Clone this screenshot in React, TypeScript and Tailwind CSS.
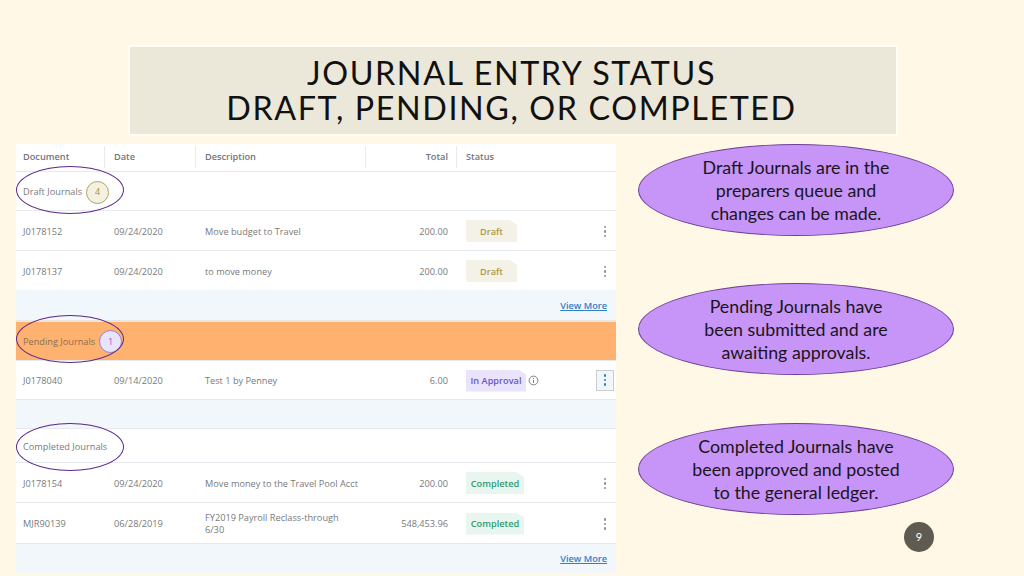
import React from "react";

const rowGrid = "grid grid-cols-[91px_91px_160px_83px_1fr] items-center pl-[7px] pr-[8px] pt-[2px]";

function Kebab({ active }: { active?: boolean }) {
  const c = active ? "bg-[#1f7fd0]" : "bg-[#8d8f92]";
  return (
    <div className={"flex flex-col items-center justify-center gap-[2px] " + (active ? "w-[18px] h-[21px] mr-[-6px] mt-[-2px] border border-[#c9ced2] bg-[#f2f6f9]" : "w-[6px]")}>
      <span className={"w-[2.5px] h-[2.5px] rounded-full " + c} />
      <span className={"w-[2.5px] h-[2.5px] rounded-full " + c} />
      <span className={"w-[2.5px] h-[2.5px] rounded-full " + c} />
    </div>
  );
}

const tone = {
  Draft: "w-[51px] bg-[#f4f1e7] text-[#b09a3c] justify-center",
  "In Approval": "w-[60px] bg-[#e9e3fc] text-[#6a55c4] justify-center",
  Completed: "w-[58px] bg-[#e9f6f0] text-[#2f9a70] justify-center",
} as const;

function Row({ doc, date, desc, total, status, info, active, h, border = true }: {
  doc: string; date: string; desc: React.ReactNode; total: string; status: keyof typeof tone; info?: boolean; active?: boolean; h: string; border?: boolean;
}) {
  return (
    <div className={rowGrid + " text-[9.2px] text-[#777a7d] bg-white " + h + (border ? " border-b border-[#e6eaee]" : "")}>
      <div>{doc}</div>
      <div>{date}</div>
      <div className="leading-[12px] whitespace-nowrap">{desc}</div>
      <div className="text-right">{total}</div>
      <div className="pl-[18px] flex items-center justify-between">
        <div className="flex items-center gap-[2px] mt-[-1px]">
          <div className={"flex items-center h-[22px] pt-[1px] font-semibold text-[9.2px] [clip-path:polygon(0_0,86%_0,100%_22%,100%_100%,0_100%)] " + tone[status]}>{status}</div>
          {info && (
            <svg width="11" height="11" viewBox="0 0 11 11" fill="none" stroke="#6f7275" strokeWidth="0.9">
              <circle cx="5.5" cy="5.5" r="4.4" />
              <path d="M5.5 5v3M5.5 3v1" />
            </svg>
          )}
        </div>
        <Kebab active={active} />
      </div>
    </div>
  );
}

function Group({ label, count, badge, text, bg, h }: { label: string; count?: string; badge?: string; text: string; bg: string; h: string }) {
  return (
    <div className={"flex items-center pl-[7px] gap-[4px] text-[9.2px] border-b border-[#e6eaee] " + text + " " + bg + " " + h}>
      <span>{label}</span>
      {count && (
        <span className={"w-[23px] h-[23px] rounded-full border flex items-center justify-center text-[9px] " + badge}>{count}</span>
      )}
    </div>
  );
}

function ViewMore({ h, label = true }: { h: string; label?: boolean }) {
  return (
    <div className={"flex items-center justify-end pr-[9px] pt-[1px] bg-[#f2f7fb] text-[9.2px] font-semibold text-[#2f80c8] underline " + h}>
      {label && "View More"}
    </div>
  );
}

function Oval({ lines, className }: { lines: string[]; className: string }) {
  return (
    <div className={"w-[316px] h-[92px] rounded-[50%] bg-[#c795f7] border border-[#6e3f95] flex flex-col items-center justify-center text-[17.8px] leading-[23px] text-[#1a1420] " + className}>
      {lines.map((l) => <div key={l}>{l}</div>)}
    </div>
  );
}

function Ring({ top }: { top: string }) {
  return <div className={"absolute left-[16px] w-[108px] h-[48px] rounded-[50%] border border-[#5b2a8c] " + top} />;
}

export default function App() {
  return (
    <div className="relative w-[1024px] h-[576px] overflow-hidden bg-[#fff8e6] font-['Lato',sans-serif] flex flex-col">
      <div className="ml-[128px] mt-[45px] w-[770px] h-[91px] bg-[#ece8d9] border-2 border-[#fffdf6] flex flex-col items-center justify-center text-[32.3px] leading-[35px] tracking-[1.6px] text-[#111111]">
        <div className="ml-[-3px] mt-[-2px]">JOURNAL ENTRY STATUS</div>
        <div className="ml-[-3px]">DRAFT, PENDING, OR COMPLETED</div>
      </div>

      <div className="flex mt-[8px] ml-[16px]">
        <div className="w-[600px] h-[429px] font-['Open_Sans',sans-serif] flex flex-col bg-white">
          <div className="grid grid-cols-[89px_91px_170px_91px_1fr] items-center h-[28px] pb-[1px] border-b border-[#e6eaee] text-[9.2px] font-semibold text-[#71767b]">
            <div className="h-[22px] flex items-center pl-[7px] border-r border-[#e8ebee]">Document</div>
            <div className="h-[22px] flex items-center pl-[9px] border-r border-[#e8ebee]">Date</div>
            <div className="h-[22px] flex items-center pl-[9px] border-r border-[#e8ebee]">Description</div>
            <div className="h-[22px] flex items-center justify-end pr-[8px] border-r border-[#e8ebee]">Total</div>
            <div className="pl-[9px]">Status</div>
          </div>
          <Group label="Draft Journals" count="4" badge="bg-[#f5f1e2] border-[#aaa46a] text-[#9a9440]" text="text-[#777a7d]" bg="bg-white" h="h-[39px] pt-[2px]" />
          <Row doc="J0178152" date="09/24/2020" desc="Move budget to Travel" total="200.00" status="Draft" h="h-[40px]" />
          <Row doc="J0178137" date="09/24/2020" desc="to move money" total="200.00" status="Draft" h="h-[39px]" border={false} />
          <ViewMore h="h-[30px]" />
          <div className="h-[2px] bg-[#e9e7df]" />
          <Group label="Pending Journals" count="1" badge="bg-[#e9e3fc] border-[#8f80c8] text-[#7a6cc0]" text="text-[#8a6d4e]" bg="bg-[#ffb26f]" h="h-[39px] pt-[1px]" />
          <Row doc="J0178040" date="09/14/2020" desc="Test 1 by Penney" total="6.00" status="In Approval" info active h="h-[39px]" />
          <ViewMore h="h-[28px]" label={false} />
          <div className="h-[1px] bg-[#e6eaee]" />
          <Group label="Completed Journals" text="text-[#777a7d]" bg="bg-white" h="h-[34px] pt-[3px]" />
          <Row doc="J0178154" date="09/24/2020" desc="Move money to the Travel Pool Acct" total="200.00" status="Completed" h="h-[40px]" />
          <Row doc="MJR90139" date="06/28/2019" desc={<>FY2019 Payroll Reclass-through<br />6/30</>} total="548,453.96" status="Completed" h="h-[41px]" />
          <ViewMore h="h-[29px]" />
        </div>

        <div className="ml-[22px] flex flex-col">
          <Oval className="" lines={["Draft Journals are in the", "preparers queue and", "changes can be made."]} />
          <Oval className="mt-[47px]" lines={["Pending Journals have", "been submitted and are", "awaiting approvals."]} />
          <Oval className="mt-[48px]" lines={["Completed Journals have", "been approved and posted", "to the general ledger."]} />
        </div>
      </div>

      <Ring top="top-[166px]" />
      <Ring top="top-[315px]" />
      <Ring top="top-[423px]" />

      <div className="absolute left-[904px] top-[522px] w-[30px] h-[30px] rounded-full bg-[#5f5b50] text-white text-[11px] flex items-center justify-center">9</div>
    </div>
  );
}
